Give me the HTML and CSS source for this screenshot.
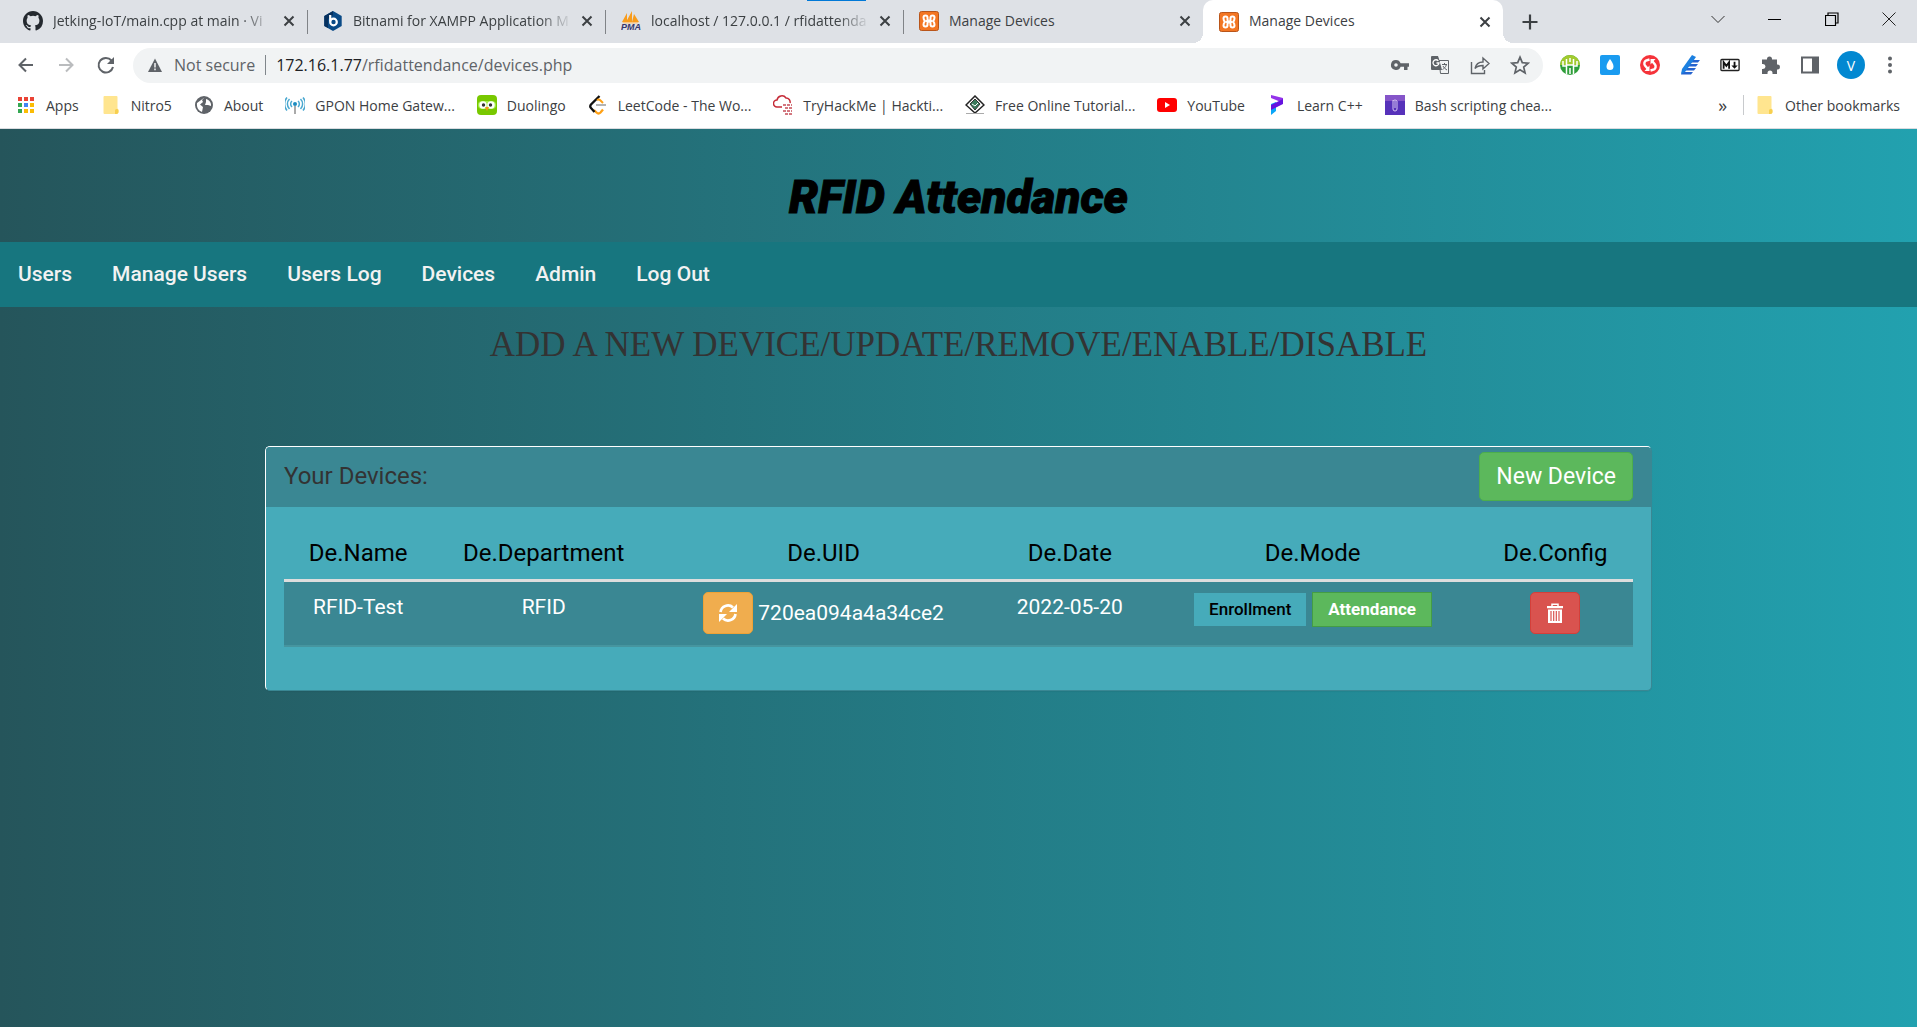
FILE: index.html
```html
<!DOCTYPE html>
<html lang="en">
<head>
<meta charset="utf-8">
<title>Manage Devices</title>
<link rel="stylesheet" href="styles.css">
</head>
<body>
<svg class="defs" aria-hidden="true">
  <symbol id="close" viewBox="0 0 12 12"><path d="M1.5 1.5l9 9M10.5 1.5l-9 9" stroke="#3c4043" stroke-width="2" fill="none"/></symbol>
  <symbol id="xampp" viewBox="0 0 20 20"><rect x=".5" y=".5" width="19" height="19" rx="2" fill="#f37623" stroke="#b9551a"/><path d="M6.500 4.500a2 2 0 0 1 2 2v1.500a1.500 1.500 0 0 0 3 0V6.500a2 2 0 0 1 4 0c0 1.500-.5 2.500-1.500 3.500 1 1 1.500 2 1.500 3.500a2 2 0 0 1-4 0V12a1.500 1.500 0 0 0-3 0v1.500a2 2 0 0 1-4 0c0-1.500.5-2.500 1.500-3.500-1-1-1.500-2-1.500-3.500a2 2 0 0 1 2-2z" fill="none" stroke="#fff" stroke-width="2"/><path d="M7 10h6" stroke="#fff" stroke-width="2"/></symbol>
  <symbol id="folder" viewBox="0 0 16 20"><path d="M1.500 1h12a1 1 0 0 1 1 1v11.500a2 2 0 0 1 1 1.500v2a2 2 0 0 1-2 2h-12a1 1 0 0 1-1-1V2a1 1 0 0 1 1-1z" fill="#ffe58f"/><path d="M12 19v-3.500a1.800 1.800 0 0 1 3.500 0v1.700a2 2 0 0 1-2 1.800z" fill="#f7cf4f"/></symbol>
</svg>
<header class="browser">
  <div class="tabs">
    <div class="tab first">
      <svg class="fav" viewBox="0 0 16 16"><path fill="#24292f" d="M8 0C3.580 0 0 3.580 0 8c0 3.540 2.290 6.530 5.470 7.590.4.070.55-.17.55-.38 0-.19-.01-.82-.01-1.490-2.010.37-2.530-.49-2.690-.94-.09-.23-.48-.94-.82-1.130-.28-.15-.68-.52-.01-.53.63-.01 1.080.58 1.230.82.72 1.210 1.870.87 2.330.66.070-.52.28-.87.51-1.070-1.780-.2-3.640-.89-3.640-3.950 0-.87.31-1.590.82-2.150-.08-.2-.36-1.020.08-2.120 0 0 .67-.21 2.200.82a7.600 7.600 0 0 1 4 0c1.530-1.040 2.200-.82 2.200-.82.44 1.100.16 1.920.08 2.120.51.56.82 1.270.82 2.150 0 3.070-1.870 3.750-3.650 3.950.29.25.54.73.54 1.480 0 1.070-.01 1.930-.01 2.200 0 .21.150.46.550.380A8 8 0 0 0 16 8c0-4.420-3.580-8-8-8z"/></svg>
      <span class="tab-title fade">Jetking-IoT/main.cpp at main · Vi</span>
      <button class="x" aria-label="Close tab"><svg><use href="#close"/></svg></button>
    </div>
    <div class="tab">
      <svg class="fav" viewBox="0 0 20 20"><path d="M10 0l8.700 5v10L10 20l-8.700-5V5z" fill="#0a4a86"/><path d="M1.300 5L10 0v4L5 8v9L1.300 15z" fill="#06305e"/><path d="M7.200 4v6.500" stroke="#fff" stroke-width="2.200"/><circle cx="10.500" cy="11" r="3.300" fill="none" stroke="#fff" stroke-width="2.200"/></svg>
      <span class="tab-title fade">Bitnami for XAMPP Application M</span>
      <button class="x" aria-label="Close tab"><svg><use href="#close"/></svg></button>
    </div>
    <div class="tab">
      <svg class="fav" viewBox="0 0 20 20"><path d="M6 2v9H1zM11 0v11H5zM13 3l5 8h-7z" fill="#f89c1c"/><path d="M1 11h17l-2 1.500H3z" fill="#fbc580"/><text x="0" y="19" class="pma">PMA</text></svg>
      <span class="tab-title fade">localhost / 127.0.0.1 / rfidattenda</span>
      <button class="x" aria-label="Close tab"><svg><use href="#close"/></svg></button>
    </div>
    <div class="tab last">
      <svg class="fav"><use href="#xampp"/></svg>
      <span class="tab-title">Manage Devices</span>
      <button class="x" aria-label="Close tab"><svg><use href="#close"/></svg></button>
    </div>
    <div class="tab active">
      <svg class="fav"><use href="#xampp"/></svg>
      <span class="tab-title">Manage Devices</span>
      <button class="x" aria-label="Close tab"><svg><use href="#close"/></svg></button>
    </div>
    <button class="new-tab" aria-label="New tab"><svg viewBox="0 0 16 16"><path d="M8 0.500v15M.5 8h15" stroke="#3c4043" stroke-width="2.200"/></svg></button>
    <div class="window">
      <button aria-label="Search tabs"><svg viewBox="0 0 14 14"><path d="M.5 4L7 10.500 13.500 4" stroke="#333" fill="none"/></svg></button>
      <button aria-label="Minimize"><svg viewBox="0 0 14 14"><path d="M0 7.500h13" stroke="#000" fill="none"/></svg></button>
      <button aria-label="Restore"><svg viewBox="0 0 14 14"><path d="M.5 3.500h10v10H.5zM3 3V1h10v10h-2" stroke="#000" stroke-width="1.200" fill="none"/></svg></button>
      <button aria-label="Close"><svg viewBox="0 0 14 14"><path d="M.5.5l13 13M13.500.5l-13 13" stroke="#222" fill="none"/></svg></button>
    </div>
  </div>
  <div class="toolbar">
    <button aria-label="Back"><svg viewBox="0 0 20 20"><path d="M17 10H4M10 3.500L3.500 10l6.500 6.500" stroke="#5f6368" stroke-width="2" fill="none"/></svg></button>
    <button aria-label="Forward"><svg viewBox="0 0 20 20"><path d="M3 10h13M10 3.500l6.500 6.500-6.500 6.500" stroke="#babcbe" stroke-width="2" fill="none"/></svg></button>
    <button aria-label="Reload"><svg viewBox="0 0 20 20"><path d="M15.500 5.500A7.300 7.300 0 1 0 17 12" stroke="#5f6368" stroke-width="2" fill="none"/><path d="M18 2v7h-7z" fill="#5f6368"/></svg></button>
    <div class="omnibox">
      <svg class="warn" viewBox="0 0 14 14"><path d="M7 .5L14 14H0z" fill="#5f6368"/><path d="M7 5v4.500M7 10.500v1.700" stroke="#fff" stroke-width="1.400"/></svg>
      <span class="secure">Not secure</span>
      <span class="bar"></span>
      <span class="url"><b>172.16.1.77</b>/rfidattendance/devices.php</span>
      <svg viewBox="0 0 20 20"><path fill-rule="evenodd" d="M6 5a5 5 0 0 1 4.600 3.300H19v3.500h-1.500V15H14v-3.200h-3.400A5 5 0 1 1 6 5zm0 3.200a1.800 1.800 0 1 0 0 3.600 1.800 1.800 0 0 0 0-3.600z" fill="#5f6368"/></svg>
      <svg viewBox="0 0 20 20"><path d="M9 5.500h9.500v13h-8z" fill="#f1f3f4" stroke="#5f6368"/><path d="M2 1h6l1 3 3 11H2a1 1 0 0 1-1-1V2a1 1 0 0 1 1-1z" fill="#5f6368"/><path d="M12 9.500h5M14.500 8v1.500M16.500 9.500c-1 3-2.500 4-4 5M13 11c1 2 2.500 3 4 4" stroke="#5f6368" fill="none"/><path d="M8.300 5.800A3 3 0 1 0 9 8H6.500" stroke="#fff" stroke-width="1.300" fill="none"/></svg>
      <svg viewBox="0 0 20 20"><path d="M1.500 7v11.500h13V15M5 13.500C6 8.500 9 7 13 7V3l6 5.500-6 5.500v-3.500c-4 0-6 .5-8 3z" stroke="#5f6368" stroke-width="1.400" fill="none"/></svg>
      <svg viewBox="0 0 20 20"><path d="M10 2.200l2.300 5.500 5.900.5-4.500 3.900 1.400 5.800-5.100-3.100-5.100 3.100 1.400-5.800L1.800 8.200l5.900-.5z" stroke="#5f6368" stroke-width="1.700" fill="none"/></svg>
    </div>
    <div class="extensions">
      <svg viewBox="0 0 20 20"><circle cx="10" cy="10" r="10" fill="#2f9e3a"/><path d="M0 10a10 10 0 0 1 20 0z" fill="#a2ca2e"/><path d="M6.500 4v15M10 3v4M10 13v6M13.500 4v15M3 6v5h3M17 6v5h-3M7 10h6" stroke="#fff" stroke-width="1.500" fill="none"/></svg>
      <svg viewBox="0 0 20 20"><rect width="20" height="20" rx="2" fill="#1a9bf0"/><path d="M10 4c2 3 3.500 5 3.500 7.500a3.500 3.500 0 0 1-7 0C6.500 9 8 7 10 4z" fill="#fff"/></svg>
      <svg viewBox="0 0 20 20"><circle cx="10" cy="10" r="10" fill="#f5333a"/><path d="M9.500 4.500L6 5.500a3.500 3.500 0 0 0-1 5l2.500 3M10.500 15.500l3.500-1a3.500 3.500 0 0 0 1-5L12.500 6.500" stroke="#fff" stroke-width="2.400" fill="none"/><path d="M9.500 10.500V16H4.500zM10.500 9.500V4h5z" fill="#fff"/></svg>
      <svg viewBox="0 0 20 20"><path d="M11 5h9l-2 2.500h-7zM9 9h9l-2 2.500H8zM6 13h10l-2 2.500H5zM2 17h11l-2 2.500H1z" fill="#2563cf"/><path d="M12 0l4 2L5 17l-4 2 1-5z" fill="#1c80e0"/></svg>
      <svg class="md" viewBox="0 0 22 20"><rect x="1" y="4" width="20" height="12" rx="1" fill="#fff" stroke="#222" stroke-width="1.500"/><path d="M4 14V7l3 4 3-4v7M16 6.500v5" stroke="#111" stroke-width="2" fill="none"/><path d="M12.500 10.500h7L16 14z" fill="#111"/></svg>
      <svg viewBox="0 0 20 20"><path d="M2 4.500h5V4a2.500 2.500 0 0 1 5 0v.5h5v5h.5a2.500 2.500 0 0 1 0 5H17V19h-4.500v-1a2.500 2.500 0 0 0-5 0v1H2v-5h1a2.500 2.500 0 0 0 0-5H2z" fill="#5f6368"/></svg>
      <svg viewBox="0 0 20 20"><rect x="2" y="2.500" width="16" height="15" fill="none" stroke="#5f6368" stroke-width="2"/><path d="M12 2h6v16h-6z" fill="#5f6368"/></svg>
    </div>
    <button class="avatar">V</button>
    <button class="menu" aria-label="Menu"><svg viewBox="0 0 20 20"><g fill="#5f6368"><circle cx="10" cy="3.500" r="2"/><circle cx="10" cy="10" r="2"/><circle cx="10" cy="16.500" r="2"/></g></svg></button>
  </div>
  <nav class="bookmarks" aria-label="Bookmarks">
    <a href="#"><svg viewBox="0 0 20 20"><path d="M2 2h4v4H2z M8 2h4v4H8z M14 2h4v4h-4z" fill="#ea4335"/><path d="M2 8h4v4H2zM2 14h4v4H2z" fill="#34a853"/><path d="M8 8h4v4H8z" fill="#4285f4"/><path d="M14 8h4v4h-4zM8 14h4v4H8zM14 14h4v4h-4z" fill="#fbbc05"/></svg>Apps</a>
    <a href="#"><svg><use href="#folder"/></svg>Nitro5</a>
    <a href="#"><svg viewBox="0 0 20 20"><circle cx="10" cy="10" r="9" fill="#5f6368"/><path d="M10.500 2.500L8 5l1 2-3 2.500L9 12l-1 5C4 15.500 2.500 12 3 8zM12 4c4 1 5.500 4.500 5 7l-3-1-3 0 1-3z" fill="#fff"/></svg>About</a>
    <a href="#"><svg viewBox="0 0 20 20"><path d="M7 6a4 4 0 0 0 0 6M13 6a4 4 0 0 1 0 6M4.500 4a7 7 0 0 0 0 10M15.500 4a7 7 0 0 1 0 10M2 2.500a10 10 0 0 0 0 13M18 2.500a10 10 0 0 1 0 13" stroke="#4aa8d0" stroke-width="1.500" fill="none"/><circle cx="10" cy="9" r="2" fill="#1d8cc0"/><path d="M10 11v8" stroke="#aaa" stroke-width="2"/></svg>GPON Home Gatew...</a>
    <a href="#"><svg viewBox="0 0 20 20"><rect width="20" height="20" rx="4" fill="#78c800"/><rect x="1" y="6" width="18" height="8" rx="4" fill="#a5ed48"/><circle cx="6" cy="10" r="3.700" fill="#fff"/><circle cx="14" cy="10" r="3.700" fill="#fff"/><circle cx="6.500" cy="10" r="1.700" fill="#333"/><circle cx="13.500" cy="10" r="1.700" fill="#333"/><path d="M8 12h4l-2 4z" fill="#f7931e"/></svg>Duolingo</a>
    <a href="#"><svg viewBox="0 0 20 20"><path d="M8 10h10" stroke="#b3b3b3" stroke-width="2"/><path d="M15 14.500l-2.500 3q-2 2-4 0L6 15" stroke="#ffa116" stroke-width="2.300" fill="none"/><path d="M11.500 1L3 9.500q-1.500 2 0 3.500l3.500 4" stroke="#111" stroke-width="2.300" fill="none"/><path d="M9 5q2-1 3.500.5L15 8" stroke="#ffa116" stroke-width="2" fill="none"/></svg>LeetCode - The Wo...</a>
    <a href="#"><svg viewBox="0 0 20 20"><path d="M9 12H4a3.500 3.500 0 0 1 0-7 5 5 0 0 1 9-2 4 4 0 0 1 4 5" stroke="#c52b37" stroke-width="1.500" fill="none"/><path d="M10 10h9M12 13h7M10 16h9M12 19h7" stroke="#d37880" stroke-width="2" stroke-dasharray="3 1"/></svg>TryHackMe | Hackti...</a>
    <a href="#"><svg viewBox="0 0 20 20"><path d="M10 1l9 9-9 8-9-8z" fill="#fff" stroke="#222" stroke-width="1.500"/><path d="M10 4l5 5-5 6-5-6z" fill="#39795a" stroke="#333"/><path d="M7 9l3 2 3-3" stroke="#fff" fill="none"/><path d="M1 18.500h18" stroke="#aaa"/></svg>Free Online Tutorial...</a>
    <a href="#"><svg viewBox="0 0 20 20"><rect y="3" width="20" height="14" rx="3" fill="#f00"/><path d="M8 7l5 3-5 3z" fill="#fff"/></svg>YouTube</a>
    <a href="#"><svg viewBox="0 0 20 20"><path d="M4 9l5-2v9l-5 4z" fill="#09a6f8"/><path d="M4 0l12 3v5L9 5 4 3z" fill="#9333ea"/><path d="M16 4v5L4 15v-5z" fill="#6512df"/></svg>Learn C++</a>
    <a href="#"><svg viewBox="0 0 20 20"><path fill="#5732ba" d="M0 0h20v20H0z"/><path fill="#9864d0" d="M0 0h20v6H0z" opacity=".7"/><path d="M8 5v9a2 2 0 0 0 4 0V6a2.500 2.500 0 0 0-4 0M10 6v7" stroke="#d6c5f1" fill="none"/></svg>Bash scripting chea...</a>
    <button class="more" aria-label="More bookmarks">»</button>
    <a class="other" href="#"><svg><use href="#folder"/></svg>Other bookmarks</a>
  </nav>
</header>
<div class="site">
  <h1>RFID Attendance</h1>
  <nav class="topnav"><a href="#">Users</a><a href="#">Manage Users</a><a href="#">Users Log</a><a href="#">Devices</a><a href="#">Admin</a><a href="#">Log Out</a></nav>
  <main>
    <h2>ADD A NEW DEVICE/UPDATE/REMOVE/ENABLE/DISABLE</h2>
    <section class="panel">
      <div class="panel-head"><span>Your Devices:</span><button class="btn new">New Device</button></div>
      <div class="panel-body">
        <table>
          <colgroup><col class="c-name"><col class="c-dep"><col class="c-uid"><col class="c-date"><col class="c-mode"><col></colgroup>
          <thead><tr><th>De.Name</th><th>De.Department</th><th>De.UID</th><th>De.Date</th><th>De.Mode</th><th>De.Config</th></tr></thead>
          <tbody><tr>
            <td>RFID-Test</td><td>RFID</td>
            <td><div class="cell"><button class="btn icon refresh" aria-label="Refresh UID"><svg viewBox="0 0 20 20"><path d="M2.500 9A7.500 7.500 0 0 1 15 4.500M17.500 11A7.500 7.500 0 0 1 5 15.500" stroke="#fff" stroke-width="2.700" fill="none"/><path d="M19 1v8h-8zM1 19v-8h8z" fill="#fff"/></svg></button><span>720ea094a4a34ce2</span></div></td>
            <td>2022-05-20</td>
            <td><div class="cell modes">
              <input type="radio" id="enrol" name="mode"><label for="enrol">Enrollment</label>
              <input type="radio" id="attend" name="mode" checked><label for="attend">Attendance</label>
            </div></td>
            <td><div class="cell"><button class="btn icon trash" aria-label="Delete device"><svg viewBox="0 0 20 20"><path d="M7 3V1.200h6V3" stroke="#fff" stroke-width="1.500" fill="none"/><path d="M2 3h16v2.200H2zM3 6.500h14V20H3z" fill="#fff"/><path d="M6 8v10M8.700 8v10M11.300 8v10M14 8v10" stroke="#d9534f" stroke-width="1.200"/></svg></button></div></td>
          </tr></tbody>
        </table>
      </div>
    </section>
  </main>
</div>
</body>
</html>
```
FILE: styles.css
```css
* { box-sizing: border-box; }
body { margin: 0; min-height: 100vh; display: flex; flex-direction: column; font-family: Roboto, sans-serif; }
button { border: 0; background: none; padding: 0; font: inherit; color: inherit; }
a { color: inherit; text-decoration: none; }
svg { display: block; flex: none; }
.defs { position: absolute; width: 0; height: 0; }

/* Browser window */
.browser { background: #fff; color: #3c4043; font: 14px "Open Sans", sans-serif; border-bottom: 1px solid #dadce0; }
.tabs { display: flex; height: 43px; background: #dee1e6; position: relative; }
.tabs::before { content: ""; position: absolute; left: 42.1%; top: 0; width: 59px; height: 1px; background: #0078d7; }
.tab { width: 298px; padding: 0 12px 0 16px; display: flex; align-items: center; height: 42px; position: relative; }
.tab.first { width: 307px; padding-left: 23px; }
.tab.last { width: 300px; }
.tab:not(.last):not(.active)::after { content: ""; position: absolute; right: -1px; top: 10px; width: 1px; height: 24px; background: #808387; }
.tab.active { width: 300px; height: 43px; background: #fff; border-radius: 10px 10px 0 0; }
.tab.active::before, .tab.active::after { content: ""; position: absolute; bottom: 0; width: 10px; height: 10px; }
.tab.active::before { left: -10px; background: radial-gradient(circle at 0 0, #dee1e6 10px, #fff 10px); }
.tab.active::after { right: -10px; background: radial-gradient(circle at 100% 0, #dee1e6 10px, #fff 10px); }
.fav { width: 20px; height: 20px; margin-right: 10px; }
.tab-title { flex: 1; white-space: nowrap; padding-bottom: 2px; }
.fade { -webkit-mask: linear-gradient(to right, #000 85%, transparent); mask: linear-gradient(to right, #000 85%, transparent); }
.x { margin-left: 9px; }
.x svg { width: 12px; height: 12px; }
.pma { font: italic bold 9px "Liberation Sans", sans-serif; fill: #38366b; }
.new-tab { padding: 0 19px; }
.new-tab svg { width: 16px; height: 16px; }
.window { margin-left: auto; display: flex; gap: 43px; padding-right: 21px; height: 38px; }
.window svg { width: 14px; height: 14px; }
.toolbar { display: flex; align-items: center; height: 44px; padding: 0 17px 0 16px; gap: 20px; }
.toolbar svg { width: 20px; height: 20px; }
.omnibox { flex: 1; display: flex; align-items: center; height: 35px; border-radius: 18px; background: #f1f3f4; padding: 0 13px 0 15px; gap: 20px; font-size: 16px; color: #5f6368; margin: 0 -3px; }
.omnibox .warn { width: 14px; height: 14px; margin-right: -8px; }
.bar { width: 1px; height: 20px; background: #80868b; margin: 0 -10px; }
.url { flex: 1; }
.url b { font-weight: 400; color: #202124; }
.extensions { display: flex; gap: 20px; }
.avatar { width: 28px; height: 28px; border-radius: 50%; background: #0288d1; color: #fff; font-size: 14px; margin-left: -3px; }
.menu { margin-left: -5px; }
.bookmarks { display: flex; align-items: center; height: 41px; padding: 0 17px 5px 16px; gap: 22px; white-space: nowrap; }
.bookmarks a { display: flex; align-items: center; gap: 10px; }
.bookmarks svg { width: 20px; height: 20px; }
.more { margin-left: auto; margin-right: -6px; font-size: 18px; }
.other { border-left: 1px solid #c8cacd; padding-left: 11px; }

/* Attendance site */
.site { flex: 1; background: linear-gradient(to right, #25555b, #22a1af); }
h1 { margin: 0; padding: 38px 0 15px; text-align: center; font: italic 900 46px/60px Impact, Roboto, sans-serif; color: #000; -webkit-text-stroke: 1px #000; }
.topnav { background: #17767f; display: flex; height: 65px; align-items: center; padding: 0 18px 2px; gap: 40px; font-size: 21px; font-weight: 500; color: #f2f2f2; }
h2 { margin: 0; padding: 18px 0 0; text-align: center; color: #333; font: 400 35px/40px "Liberation Serif", serif; }
.panel { width: 1387px; max-width: 94%; margin: 81px auto 0; border: 1px solid #3a8793; border-top-color: #fff; border-left-color: #fff; border-radius: 5px; background: #46abba; box-shadow: 0 1px 1px #0000000d; overflow: hidden; }
.panel-head { display: flex; justify-content: space-between; align-items: center; background: #3a8793; height: 60px; padding: 0 18px 2px; font-size: 24px; color: #333; }
.btn { border: 1px solid; border-radius: 5px; color: #fff; }
.new { background: #5cb85c; border-color: #4cae4c; height: 49px; padding: 0 16px; font-size: 23px; }
.panel-body { padding: 20px 18px 43px; }
table { width: 100%; table-layout: fixed; border-collapse: separate; border-spacing: 0; }
.c-name { width: 11%; }
.c-dep { width: 16.5%; }
.c-uid { width: 25%; }
.c-date { width: 11.5%; }
.c-mode { width: 24.5%; }
th { font-size: 24px; line-height: 32px; font-weight: 400; color: #000; padding: 10px 0; border-bottom: 3px solid #ddd; }
td { background: #3a8793; color: #fff; font-size: 21px; line-height: 30px; text-align: center; vertical-align: top; padding: 10px 0; height: 65px; border-bottom: 2px solid #46959f; }
.cell { display: flex; justify-content: center; align-items: center; gap: 5px; }
.icon { width: 50px; height: 42px; display: grid; place-items: center; }
.icon svg { width: 20px; height: 20px; }
.refresh { background: #f0ad4e; border-color: #eea236; }
.trash { background: #d9534f; border-color: #d43f3a; }
.modes input { position: absolute; opacity: 0; }
.modes label { height: 35px; padding: 0 15px; font-size: 17px; line-height: 33px; font-weight: 500; background: #46abba; border: 1px solid #3a8793; color: #000; }
.modes input:checked + label { background: #5cb85c; border-color: #449d44; color: #fff; font-weight: 700; }
```
